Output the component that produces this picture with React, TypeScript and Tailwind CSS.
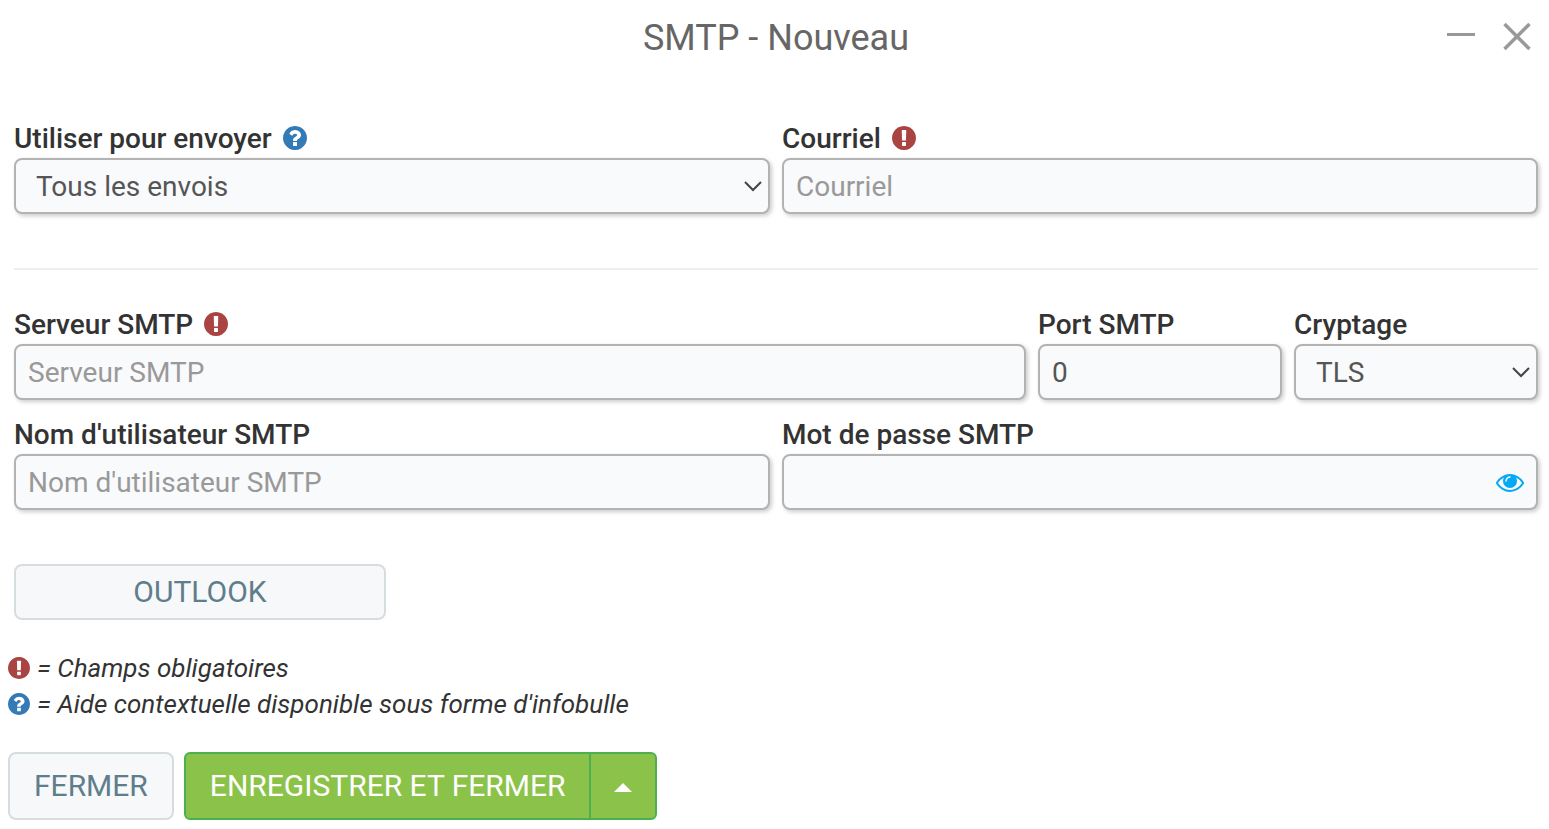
import { useState } from 'react';
import clsx from 'clsx';

interface IconProps {
  className?: string;
}

const RequiredIcon = ({ className }: IconProps) => (
  <svg viewBox="128 128 1536 1536" fill="currentColor" className={clsx('shrink-0 text-[#a94442]', className)} aria-hidden="true">
    <path d="M896 128q209 0 385.5 103t279.5 279.5 103 385.5-103 385.5-279.5 279.5-385.5 103-385.5-103-279.5-279.5-103-385.5 103-385.5 279.5-279.5 385.5-103zm128 1247v-190q0-14-9-23.5t-22-9.5h-192q-13 0-23 10t-10 23v190q0 13 10 23t23 10h192q13 0 22-9.5t9-23.5zm-2-344l18-621q0-12-10-18-10-8-24-8h-220q-14 0-24 8-10 6-10 18l17 621q0 10 10 17.5t24 7.5h185q14 0 23.5-7.5t10.5-17.5z" />
  </svg>
);

const HelpIcon = ({ className }: IconProps) => (
  <svg viewBox="128 128 1536 1536" fill="currentColor" className={clsx('shrink-0 text-[#337ab7]', className)} aria-hidden="true">
    <path d="M1024 1376v-192q0-14-9-23t-23-9h-192q-14 0-23 9t-9 23v192q0 14 9 23t23 9h192q14 0 23-9t9-23zm256-672q0-88-55.5-163t-138.5-116-170-41q-243 0-371 213-15 24 8 42l132 100q7 6 19 6 16 0 25-12 53-68 86-92 34-24 86-24 48 0 85.5 26t37.5 59q0 38-20 61t-68 45q-63 28-115.5 86.5t-52.5 125.5v36q0 14 9 23t23 9h192q14 0 23-9t9-23q0-19 21.5-49.5t54.5-49.5q32-18 49-28.5t46-35 44.5-48 28-60.5 12.5-81zm384 192q0 209-103 385.5t-279.5 279.5-385.5 103-385.5-103-279.5-279.5-103-385.5 103-385.5 279.5-279.5 385.5-103 385.5 103 279.5 279.5 103 385.5z" />
  </svg>
);

const EyeIcon = () => (
  <svg viewBox="0 384 1792 1152" fill="currentColor" className="mt-0.5 h-[18px] w-7" aria-hidden="true">
    <path d="M1664 960q-152-236-381-353 61 104 61 225 0 185-131.5 316.5t-316.5 131.5-316.5-131.5-131.5-316.5q0-121 61-225-229 117-381 353 133 205 333.5 326.5t434.5 121.5 434.5-121.5 333.5-326.5zm-720-384q0-20-14-34t-34-14q-125 0-214.5 89.5t-89.5 214.5q0 20 14 34t34 14 34-14 14-34q0-86 61-147t147-61q20 0 34-14t14-34zm848 384q0 34-20 69-140 230-376.5 368.5t-499.5 138.5-499.5-139-376.5-368q-20-35-20-69t20-69q140-229 376.5-368t499.5-139 499.5 139 376.5 368q20 35 20 69z" />
  </svg>
);

interface FieldProps {
  id: string;
  label: string;
  className: string;
  required?: boolean;
  help?: boolean;
  children: React.ReactNode;
}

const Field = ({ id, label, className, required, help, children }: FieldProps) => (
  <div className={className}>
    <label htmlFor={id} className="flex items-center gap-[11px] text-[28px] leading-[38px] font-medium text-[#333]">
      {label}
      {required && <RequiredIcon className="mb-0.5 size-6" />}
      {help && <HelpIcon className="mb-0.5 size-6" />}
    </label>
    {children}
  </div>
);

const control =
  'block h-14 w-full rounded-lg border-2 border-[#b3b3b3] bg-[#f9fafc] text-[28px] text-[#555] shadow-[2px_2px_4px_rgba(0,0,0,0.2)] outline-none placeholder:text-[#999]';

interface SelectProps {
  id: string;
  options: string[];
}

const Select = ({ id, options }: SelectProps) => (
  <div className="relative">
    <select id={id} className={clsx(control, 'appearance-none pt-0.5 pr-10 pl-5')}>
      {options.map((o) => (
        <option key={o}>{o}</option>
      ))}
    </select>
    <svg viewBox="0 0 18 12" className="pointer-events-none absolute top-[22px] right-2 h-3 w-[18px]" fill="none" stroke="#444" strokeWidth="2" aria-hidden="true">
      <path d="M1 2l8 8 8-8" />
    </svg>
  </div>
);

const App = () => {
  const [form, setForm] = useState({ email: '', server: '', port: '0', user: '', password: '' });
  const [showPassword, setShowPassword] = useState(false);

  const handleChange = (e: React.ChangeEvent<HTMLInputElement>) => {
    const { name, value } = e.target;
    setForm({ ...form, [name]: value });
  };

  return (
    <main className="bg-white font-[Roboto,sans-serif] text-[#333]">
      <header className="grid grid-cols-[1fr_auto_1fr] items-center pt-[13px] pr-[17px] pl-5">
        <h1 className="col-start-2 text-[36px] leading-[50px] text-[#666]">SMTP - Nouveau</h1>
        <div className="flex items-center justify-end gap-[27px] text-[#999]">
          <button type="button" aria-label="Réduire">
            <svg viewBox="0 0 28 32" className="h-8 w-7" stroke="currentColor" strokeWidth="3" aria-hidden="true">
              <path d="M0 12.5h28" />
            </svg>
          </button>
          <button type="button" aria-label="Fermer la fenêtre">
            <svg viewBox="0 0 30 32" className="h-8 w-[30px]" stroke="currentColor" strokeWidth="3.5" aria-hidden="true">
              <path d="M2.5 2l25 25M27.5 2l-25 25" />
            </svg>
          </button>
        </div>
      </header>

      <form onSubmit={(e) => e.preventDefault()}>
        <div className="grid grid-cols-12 gap-x-3 pt-[57px] pr-[11px] pl-[14px]">
          <Field id="usage" label="Utiliser pour envoyer" help className="col-span-6">
            <Select id="usage" options={['Tous les envois']} />
          </Field>
          <Field id="email" label="Courriel" required className="col-span-6">
            <input id="email" name="email" type="email" placeholder="Courriel" value={form.email} onChange={handleChange} className={clsx(control, 'px-3')} />
          </Field>

          <hr className="col-span-12 mt-[54px] mb-9 border-t-2 border-[#eee]" />

          <Field id="server" label="Serveur SMTP" required className="col-span-8">
            <input id="server" name="server" type="text" placeholder="Serveur SMTP" value={form.server} onChange={handleChange} className={clsx(control, 'px-3')} />
          </Field>
          <Field id="port" label="Port SMTP" className="col-span-2">
            <input id="port" name="port" type="text" value={form.port} onChange={handleChange} className={clsx(control, 'px-3')} />
          </Field>
          <Field id="encryption" label="Cryptage" className="col-span-2">
            <Select id="encryption" options={['TLS', 'SSL']} />
          </Field>

          <Field id="user" label="Nom d'utilisateur SMTP" className="col-span-6 mt-4">
            <input id="user" name="user" type="text" placeholder="Nom d'utilisateur SMTP" value={form.user} onChange={handleChange} className={clsx(control, 'px-3')} />
          </Field>
          <Field id="password" label="Mot de passe SMTP" className="col-span-6 mt-4">
            <div className="relative">
              <input id="password" name="password" type={showPassword ? 'text' : 'password'} value={form.password} onChange={handleChange} className={clsx(control, 'pr-12 pl-3')} />
              <button type="button" aria-label="Afficher le mot de passe" onClick={() => setShowPassword(!showPassword)} className="absolute inset-y-0 right-[14px] text-[#03a9f4]">
                <EyeIcon />
              </button>
            </div>
          </Field>

          <button type="button" className="col-span-3 mt-[54px] h-14 rounded-lg border-2 border-[#d6dde1] bg-[#f6f8fa] text-[30px] leading-10 text-[#607d8b]">
            OUTLOOK
          </button>
        </div>

        <div className="mt-[30px] px-2 text-[26px] leading-9 italic">
          <p className="flex items-center gap-[7px]">
            <RequiredIcon className="size-[22px]" />
            = Champs obligatoires
          </p>
          <p className="flex items-center gap-[7px]">
            <HelpIcon className="size-[22px]" />
            = Aide contextuelle disponible sous forme d'infobulle
          </p>
        </div>

        <div className="mt-[30px] flex gap-[10px] px-2 pb-2 text-[30px] leading-10">
          <button type="button" className="h-[68px] rounded-lg border-2 border-[#d6dde1] bg-[#f6f8fa] px-6 text-[#607d8b]">
            FERMER
          </button>
          <div className="flex h-[68px] divide-x-2 divide-[#4caf50] overflow-hidden rounded-md border-2 border-[#4caf50] bg-[#8bc34a] text-white">
            <button type="submit" className="pr-[23px] pl-6">
              ENREGISTRER ET FERMER
            </button>
            <button type="button" aria-label="Plus d'options" className="px-[23px]">
              <svg viewBox="0 0 18 9" className="mt-[3px] h-[9px] w-[18px]" fill="currentColor" aria-hidden="true">
                <path d="M9 0l9 9H0z" />
              </svg>
            </button>
          </div>
        </div>
      </form>
    </main>
  );
};

export default App;
